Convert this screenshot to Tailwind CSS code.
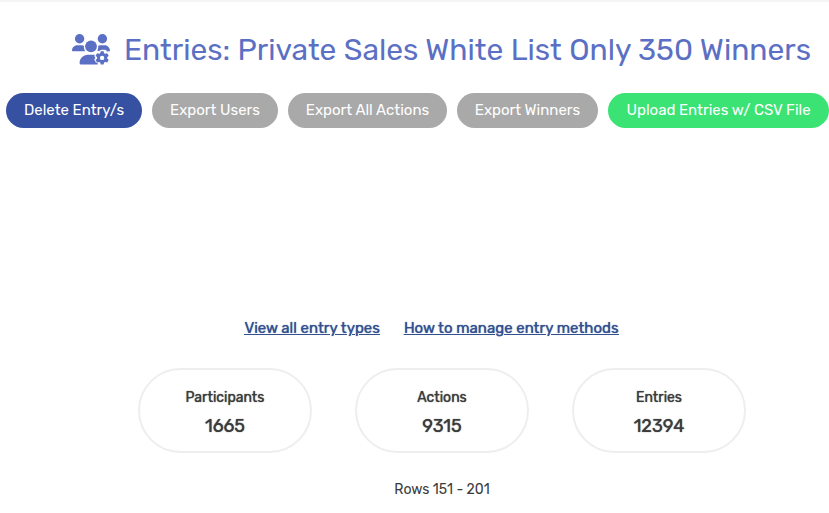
<!DOCTYPE html>
<html lang="en">
  <head>
    <meta charset="UTF-8" />
    <meta name="viewport" content="width=device-width, initial-scale=1.0" />
    <title>Entries</title>
    <script src="https://cdn.jsdelivr.net/npm/@tailwindcss/browser@4"></script>
  </head>
  <body class="bg-white font-['Rubik',Roboto,sans-serif] text-[#3c3c3c] border-t-2 border-gray-100">
    <!-- Title -->
    <header class="flex items-center justify-end gap-[14px] pt-6 pr-[18px] text-[#5b70c4]">
      <svg class="w-[38px] h-[31px] mb-[2px] shrink-0" viewBox="0 0 38 31" fill="currentColor" aria-hidden="true">
        <circle cx="7.6" cy="4.7" r="4.7" />
        <circle cx="30.4" cy="4.7" r="4.7" />
        <circle cx="19" cy="12.3" r="5.9" />
        <path d="M0 16.6c0-3 2.400-5.300 5.300-5.300h4.200c.9 0 1.700.2 2.500.5-.4 2.100.2 4 1.300 5.500H.8c-.5 0-.8-.3-.8-.7z" />
        <path d="M38 17.300c0-3.500-2.300-6-5.300-6h-4.200c-.9 0-1.600.2-2.400.5.3 1.700 0 3.300-.8 4.800l1.600.6 1.300-1 1.600-.5h2.600l1.700.3.700 1.600z" />
        <path d="M7.600 28.900c0-4.500 3.700-8.200 8.200-8.200h6.900l-.3 1.500 1.100 1.600-1.200 1.700 1.600 2.900 1.700.3.200 1.800H9.300c-.9 0-1.700-.7-1.700-1.600z" />
        <path
          fill-rule="evenodd"
          d="M28.700 17.200h2.900l.5 2 1.100.6 2-.6 1.500 2.500-1.500 1.500v1.300l1.500 1.500-1.500 2.500-2-.6-1.100.7-.5 2h-2.900l-.5-2-1.100-.7-2 .6-1.500-2.500 1.500-1.500v-1.300l-1.500-1.500 1.500-2.500 2 .6 1.100-.6zM30.100 21.700a2.200 2.200 0 1 0 0 4.400 2.200 2.200 0 0 0 0-4.400z"
        />
      </svg>
      <h1 class="text-[30px] leading-12 whitespace-nowrap">Entries: Private Sales White List Only 350 Winners</h1>
    </header>

    <!-- Actions -->
    <div class="flex gap-[10px] pl-[6px] pt-[19px] text-[15px] text-white whitespace-nowrap">
      <button class="h-[35px] basis-[136px] rounded-full bg-[#3650a2]">Delete Entry/s</button>
      <button class="h-[35px] basis-[126px] rounded-full bg-[#a9a9a9]">Export Users</button>
      <button class="h-[35px] basis-[159px] rounded-full bg-[#a9a9a9]">Export All Actions</button>
      <button class="h-[35px] basis-[141px] rounded-full bg-[#a9a9a9]">Export Winners</button>
      <button class="h-[35px] basis-[221px] rounded-full bg-[#3ae374]">Upload Entries w/ CSV File</button>
    </div>

    <!-- Help links -->
    <nav class="flex justify-center gap-6 pt-[188px] pl-[34px] text-[15px] leading-6 text-[#34508f] underline [text-shadow:0_0_1px_currentColor]">
      <a href="#">View all entry types</a>
      <a href="#">How to manage entry methods</a>
    </nav>

    <!-- Totals -->
    <dl class="flex justify-center gap-[43px] pt-7 pl-[55px] text-center [text-shadow:0_0_1px_currentColor]">
      <div class="w-[174px] rounded-full border-2 border-[#eee] pt-4 pb-2">
        <dt class="text-[14px] leading-6">Participants</dt>
        <dd class="text-[18px] leading-[33px]">1665</dd>
      </div>
      <div class="w-[174px] rounded-full border-2 border-[#eee] pt-4 pb-2">
        <dt class="text-[14px] leading-6">Actions</dt>
        <dd class="text-[18px] leading-[33px]">9315</dd>
      </div>
      <div class="w-[174px] rounded-full border-2 border-[#eee] pt-4 pb-2">
        <dt class="text-[14px] leading-6">Entries</dt>
        <dd class="text-[18px] leading-[33px]">12394</dd>
      </div>
    </dl>
    <p class="pt-6 pl-[55px] text-center text-[14px] leading-[26px]">Rows 151 - 201</p>
  </body>
</html>
